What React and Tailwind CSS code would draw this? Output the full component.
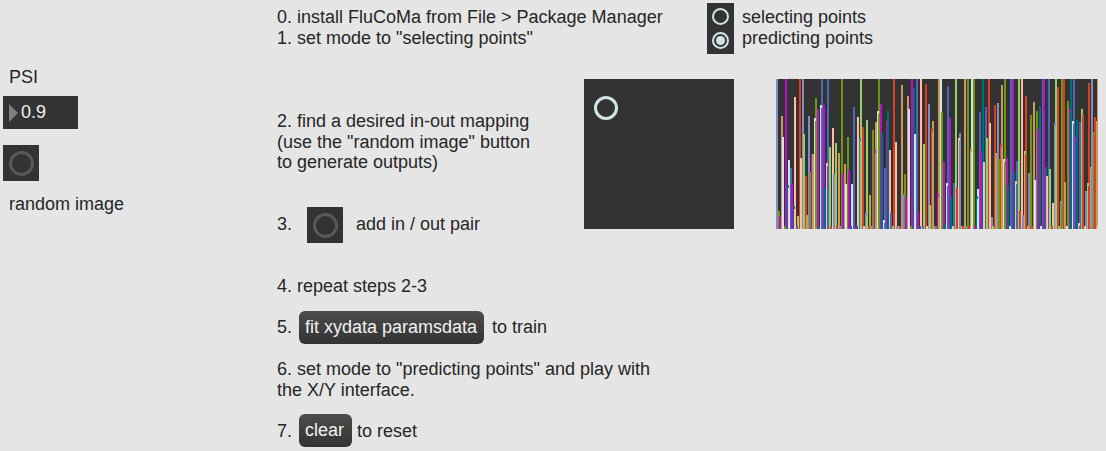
const COLORS = {
  P: '#7d8fc0', O: '#6b9a12', M: '#b80fc9', T: '#c99a5c', W: '#d2e5e6', C: '#00707c',
  B: '#4a68b5', E: '#ffbe9d', G: '#93d06c', R: '#dd3d24',
};
const CYCLE = 'POMTWOMCWBMCEBGREPGRT';

// Distance in thirds of a pixel from the top of the display to each slider head.
const LEVELS = [
  12, 408, 423, 123, 186, 453, 12, 330, 255, 279, 327, 393, 66, 453, 423, 12, 249, 12, 177, 303, 420,
  123, 291, 237, 237, 129, 69, 102, 453, 90, 12, 90, 339, 264, 12, 216, 453, 159, 297, 204, 453, 234,
  453, 12, 297, 267, 327, 186, 285, 453, 327, 96, 453, 453, 126, 189, 12, 156, 453, 414, 135, 453, 360,
  453, 165, 225, 141, 108, 12, 87, 174, 435, 279, 138, 108, 225, 414, 453, 12, 201, 453, 453, 453, 30,
  357, 297, 366, 63, 102, 453, 12, 39, 177, 12, 411, 453, 12, 453, 207, 27, 453, 87, 390, 159, 138,
  453, 453, 357, 12, 12, 111, 261, 450, 324, 33, 129, 366, 453, 324, 12, 336, 189, 174, 453, 453, 12,
  453, 12, 453, 222, 12, 12, 453, 363, 342, 111, 228, 12, 261, 96, 189, 12, 144, 426, 453, 90, 234,
  84, 252, 207, 30, 252, 12, 249, 330, 453, 12, 12, 291, 318, 258, 12, 408, 12, 420, 228, 63, 453,
  294, 120, 453, 81, 315, 108, 162, 93, 453, 12, 12, 276, 303, 12, 282, 453, 384, 144, 12, 36, 453,
  378, 12, 12, 321, 453, 78, 102, 12, 138, 12, 186, 135, 444, 141, 102, 117, 453, 348, 324, 24, 276,
  12, 171, 126, 138, 453,
];

const sliders = LEVELS.map((level, i) => {
  const slot = i % CYCLE.length;
  return {
    x: Math.ceil(i * 1.5),
    y: (level - 12) / 3,
    color: COLORS[slot === 2 && i > 127 ? 'R' : CYCLE[slot]],
  };
});

function MultiSlider() {
  return (
    <svg width="322" height="150" viewBox="0 0 322 150" shapeRendering="crispEdges" className="mt-[79px] ml-[42px] block shrink-0 bg-[#333333]">
      <rect x="321" y="0" width="1" height="150" fill="#c99a5c" />
      {sliders.map((s, i) => <rect key={i} x={s.x} y={s.y} width={i === 213 ? 1 : 2} height={150 - s.y} fill={s.color} />)}
      {sliders.map((s, i) => <rect key={i} x={s.x} y={s.y} width="2" height="3" fill={s.color} />)}
    </svg>
  );
}

function Bang({ className = '' }) {
  return (
    <div className={`flex size-9 shrink-0 items-center justify-center bg-[#333333] ${className}`}>
      <div className="size-[25px] rounded-full border-[3px] border-[#595959]" />
    </div>
  );
}

function Message({ children, className = '' }) {
  return (
    <button className={`flex h-[33px] shrink-0 items-center rounded-md bg-linear-to-b from-[#4d4d4d] to-[#333333] pl-[6px] text-[#f2f2f2] ${className}`}>
      {children}
    </button>
  );
}

export default function App() {
  return (
    <div className="flex h-[451px] w-[1106px] overflow-hidden bg-[#e5e5e5] font-['Liberation_Sans',Arial,sans-serif] text-[18px] leading-[21px] whitespace-nowrap text-[#262626]">
      <div className="w-[277px] shrink-0 pt-[67px] pl-[3px]">
        <div className="pl-1.5"><span>PSI</span></div>
        <div className="mt-2 flex h-[33px] w-[75px] items-center bg-[#333333] pl-1.5 text-[#f2f2f2]">
          <svg width="9" height="18" viewBox="0 0 9 18" className="mr-[3px]"><path d="M0 0L9 9L0 18Z" fill="#808080" /></svg>
          <span>0.9</span>
        </div>
        <Bang className="mt-4" />
        <div className="mt-[13px] pl-1.5"><span>random image</span></div>
      </div>

      <div className="flex w-[829px] shrink-0">
        <div className="w-[307px] shrink-0 pt-[7px]">
          <div><span>0. install FluCoMa from File &gt; Package Manager</span></div>
          <div><span>1. set mode to "selecting points"</span></div>
          <div className="mt-[62px] h-[63px] leading-[20.5px]">
            <div><span>2. find a desired in-out mapping</span></div>
            <div><span>(use the "random image" button</span></div>
            <div><span>to generate outputs)</span></div>
          </div>
          <div className="mt-[33px] flex h-9 items-center">
            <span className="w-[30px] pb-0.5">3.</span>
            <Bang />
            <span className="ml-[13px] pb-0.5">add in / out pair</span>
          </div>
          <div className="mt-[33px]"><span>4. repeat steps 2-3</span></div>
          <div className="mt-[14px] flex h-[33px] items-center">
            <span className="w-[22px]">5.</span>
            <Message className="w-[184.5px]">fit xydata paramsdata</Message>
            <span className="ml-[8.5px]">to train</span>
          </div>
          <div className="mt-[15px]"><span>6. set mode to "predicting points" and play with</span></div>
          <div><span>the X/Y interface.</span></div>
          <div className="mt-[13px] flex h-[33px] items-center">
            <span className="w-[22px] pt-0.5">7.</span>
            <Message className="w-[52.5px]">clear</Message>
            <span className="ml-[5.5px] pt-0.5">to reset</span>
          </div>
        </div>

        <div className="flex shrink-0 flex-col">
          <div className="ml-[123px] flex h-[54px] w-[180px] pt-[3px]">
            <div className="flex h-[51px] w-[27px] shrink-0 flex-col items-center gap-[7px] bg-[#333333] pt-[5px]">
              <div className="size-[17px] rounded-full border-2 border-[#d2e5e6]" />
              <div className="flex size-[17px] items-center justify-center rounded-full border-2 border-[#d2e5e6]">
                <div className="size-[9px] rounded-full bg-[#d2e5e6]" />
              </div>
            </div>
            <div className="ml-2 pt-1">
              <div><span>selecting points</span></div>
              <div><span>predicting points</span></div>
            </div>
          </div>
          <div className="-mt-[54px] flex">
            <div className="mt-[79px] h-[150px] w-[150px] shrink-0 bg-[#333333] pt-[17px] pl-[10px]">
              <div className="size-6 rounded-full border-[3px] border-[#d2e5e6]" />
            </div>
            <MultiSlider />
          </div>
        </div>
      </div>
    </div>
  );
}
